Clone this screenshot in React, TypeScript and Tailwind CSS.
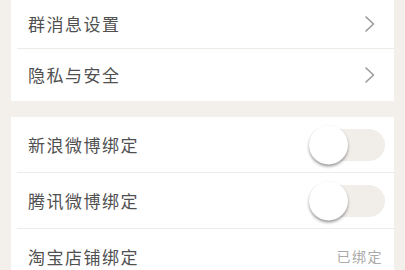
import { useState } from "react"

function Chevron() {
  return (
    <svg width="12" height="18" viewBox="0 0 12 18" fill="none">
      <path d="M2 2l7.5 7L2 16" stroke="#9a9a9a" strokeWidth="1.6" strokeLinecap="round" strokeLinejoin="round" />
    </svg>
  )
}

function Toggle({ on, onClick }: { on: boolean; onClick: () => void }) {
  return (
    <button
      onClick={onClick}
      className={`relative w-[74px] h-[32px] rounded-full ${on ? "bg-[#4cd964]" : "bg-[#f1eeea]"}`}
    >
      <span
        className={`absolute top-1/2 -translate-y-1/2 w-[39px] h-[39px] rounded-full bg-white shadow-[0_2px_3px_rgba(0,0,0,0.4)] ${on ? "right-[-2px]" : "left-[-2px]"}`}
      />
    </button>
  )
}

export default function App() {
  const [sina, setSina] = useState(false)
  const [tencent, setTencent] = useState(false)

  return (
    <div className="w-[405px] h-[270px] overflow-hidden bg-[#f3f0eb] px-[11px] font-['Noto_Sans_CJK_SC',sans-serif] text-[#505050]">
      {/* first group */}
      <div className="bg-white">
        <div className="h-[48px] flex items-center justify-between pl-[17px] pr-[18px]">
          <span className="text-[17px] tracking-[1.5px]">群消息设置</span>
          <Chevron />
        </div>
        <div className="h-px bg-[#eeebe6] ml-[6px]" />
        <div className="h-[52px] flex items-center justify-between pl-[17px] pr-[18px]">
          <span className="text-[17px] tracking-[1.5px]">隐私与安全</span>
          <Chevron />
        </div>
      </div>

      {/* second group */}
      <div className="mt-[16px] bg-white">
        <div className="h-[55px] flex items-center justify-between pl-[17px] pr-[9px]">
          <span className="text-[17px] tracking-[1.5px]">新浪微博绑定</span>
          <Toggle on={sina} onClick={() => setSina(!sina)} />
        </div>
        <div className="h-px bg-[#eeebe6] ml-[6px]" />
        <div className="h-[55px] flex items-center justify-between pl-[17px] pr-[9px]">
          <span className="text-[17px] tracking-[1.5px]">腾讯微博绑定</span>
          <Toggle on={tencent} onClick={() => setTencent(!tencent)} />
        </div>
        <div className="h-px bg-[#eeebe6] ml-[6px]" />
        <div className="h-[55px] flex items-center justify-between pl-[17px] pr-[11px]">
          <span className="text-[17px] tracking-[1.5px]">淘宝店铺绑定</span>
          <span className="text-[14px] tracking-[1.5px] text-[#aaa]">已绑定</span>
        </div>
      </div>
    </div>
  )
}
